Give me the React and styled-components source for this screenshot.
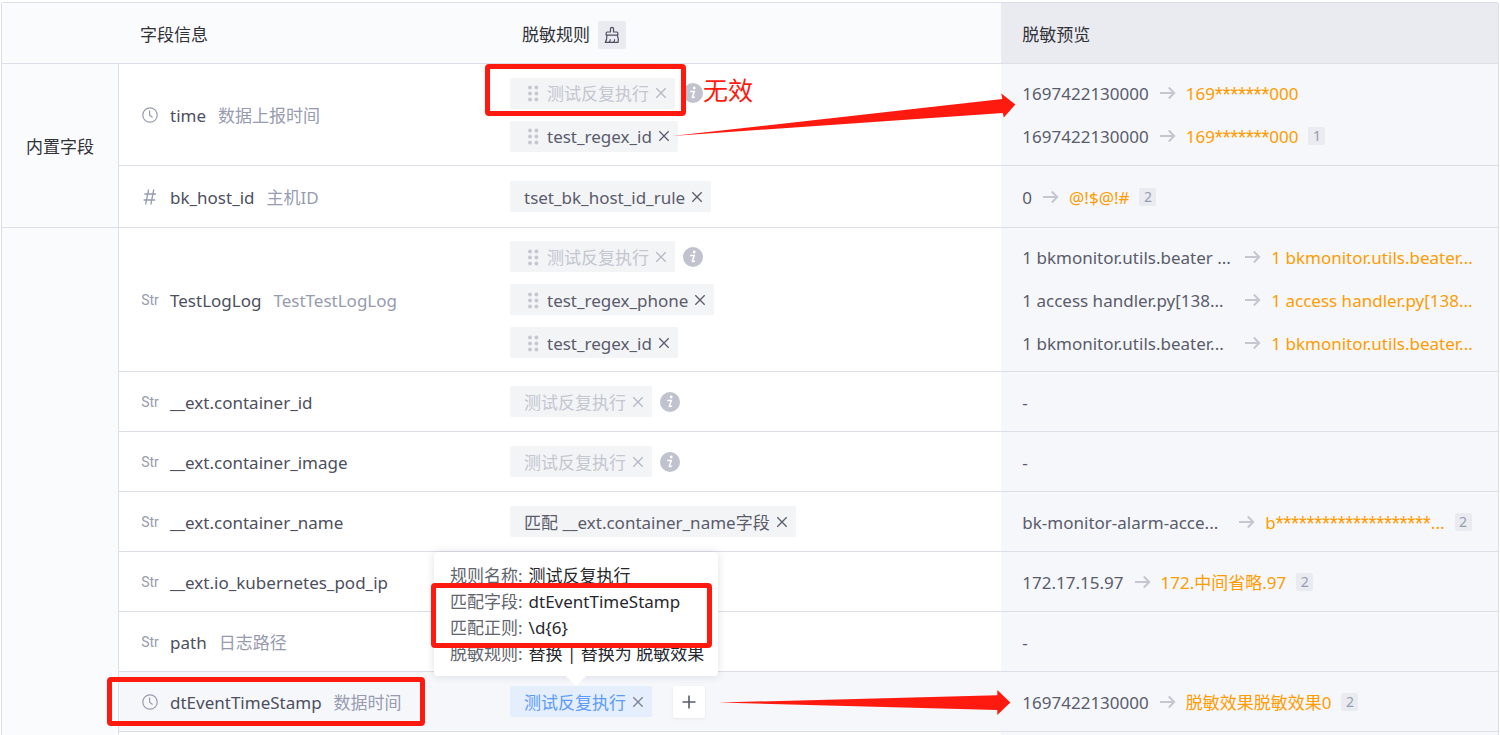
import React from "react";
import styled, { createGlobalStyle } from "styled-components";

const GlobalStyle = createGlobalStyle`
  * { box-sizing: border-box; }
  body {
    margin: 0;
    background: #fff;
    font-family: "Noto Sans", "Noto Sans CJK SC", sans-serif;
    font-size: 17px;
    line-height: 24px;
    color: #5a5c6c;
  }
  button { font: inherit; color: inherit; padding: 0; border: 0; cursor: pointer; }
`;

const Page = styled.main`
  height: 100vh;
  overflow: hidden;
  padding: 2px 1px 0;
`;

const Table = styled.table`
  width: 100%;
  table-layout: fixed;
  border-collapse: separate;
  border-spacing: 0;
  border: 1px solid #dcdee8;
  border-radius: 2px;
`;

const Col = styled.col`
  width: ${(p) => p.$width};
`;

const HeadCell = styled.th`
  height: 61px;
  padding: 3px 0 0 ${(p) => p.$indent || 21}px;
  border-bottom: 1px solid #dcdee8;
  background: ${(p) => (p.$preview ? "#eaebf0" : "#fafbfd")};
  color: #313238;
  font-weight: 400;
  text-align: left;
`;

const HeadInner = styled.div`
  display: flex;
  align-items: center;
  gap: 8px;
`;

const ClearButton = styled.button`
  display: grid;
  place-items: center;
  width: 28px;
  height: 28px;
  border-radius: 2px;
  background: #eaebf0;
`;

const GroupCell = styled.th`
  padding: 2px 0 0;
  border-right: 1px solid #dcdee8;
  border-bottom: 1px solid #dcdee8;
  background: #fafbfd;
  color: #313238;
  font-weight: 400;
  text-align: center;
`;

const Cell = styled.td`
  position: relative;
  height: ${(p) => p.$height || 60}px;
  padding: 0 0 0 ${(p) => p.$indent || 21}px;
  border-bottom: 1px solid #dcdee8;
  background: ${(p) => (p.$tint ? "#f5f7fa" : "#fff")};
  vertical-align: middle;
`;

const Field = styled.div`
  display: flex;
  align-items: center;
`;

const TypeIcon = styled.span`
  display: grid;
  place-items: center;
  width: 20px;
  margin-right: 10px;
  color: #979bb0;
  font-family: Roboto, sans-serif;
  font-size: 14px;
`;

const FieldName = styled.span`
  padding-top: 2px;
  color: #4d4f60;
`;

const FieldDesc = styled.span`
  padding-top: 2px;
  margin-left: 12px;
  color: #979bb0;
`;

const Stack = styled.div`
  display: grid;
  gap: 12px;
`;

const RuleLine = styled.div`
  display: flex;
  align-items: center;
  gap: 8px;
  height: 31px;
`;

const Tag = styled.span`
  position: relative;
  display: flex;
  align-items: center;
  height: 31px;
  padding: 0 8px 0 14px;
  border-radius: 2px;
  background: ${(p) => (p.$active ? "#e5eefd" : "#f3f4f6")};
  color: ${(p) => (p.$active ? "#5a9bfb" : p.$invalid ? "#c4c6d0" : "#5a5c6c")};
  white-space: nowrap;
`;

const TagText = styled.span`
  padding-top: 2px;
`;

const RemoveButton = styled.button`
  display: grid;
  place-items: center;
  width: 12px;
  height: 16px;
  margin-left: 6px;
  background: none;
  color: ${(p) => (p.$invalid ? "#b4b7c4" : p.$active ? "#7d8090" : "#5a5c6c")};
`;

const AddButton = styled.button`
  display: grid;
  place-items: center;
  width: 32px;
  height: 32px;
  margin-left: 13px;
  border-radius: 2px;
  background: #fff;
  box-shadow: 0 1px 3px rgba(40, 44, 80, 0.08);
`;

const Tooltip = styled.div`
  position: absolute;
  left: 50%;
  bottom: 41px;
  z-index: 3;
  width: 284px;
  margin-left: -147px;
  padding: 11px 16px 9px;
  border-radius: 4px;
  background: #fff;
  box-shadow: 0 0 8px rgba(40, 44, 80, 0.14);
  color: #26272e;
  line-height: 26px;

  &::after {
    content: "";
    position: absolute;
    left: 132px;
    top: 100%;
    border: 10px solid transparent;
    border-top-color: #fff;
    border-bottom: 0;
  }
`;

const TipRow = styled.div`
  display: flex;
  gap: 6px;
`;

const TipLabel = styled.span`
  color: #63656e;
`;

const PreviewLine = styled.div`
  display: flex;
  align-items: center;
  gap: 10px;
  height: 31px;
  white-space: nowrap;
`;

const Source = styled.span`
  min-width: ${(p) => p.$min || 0}px;
  padding-top: 2px;
`;

const Result = styled.span`
  padding-top: 2px;
  color: #ff9c01;
`;

const Stars = styled.span`
  font-family: Roboto, sans-serif;
  font-size: 18px;
`;

const Count = styled.span`
  width: 17px;
  height: 18px;
  border-radius: 2px;
  background: #eaebf0;
  color: #979bb0;
  font-size: 14px;
  line-height: 18px;
  text-align: center;
`;

const MarkBox = styled.div`
  position: absolute;
  z-index: 4;
  left: ${(p) => p.$left}px;
  top: ${(p) => p.$top}px;
  width: ${(p) => p.$width}px;
  height: ${(p) => p.$height}px;
  border: 5px solid #ff1a10;
  border-radius: 4px;
  pointer-events: none;
`;

const MarkNote = styled.strong`
  position: absolute;
  z-index: 4;
  left: 213px;
  top: 8px;
  color: #ff1a10;
  font-size: 25px;
  font-weight: 400;
  line-height: 36px;
`;

const MarkArrow = styled.svg`
  position: absolute;
  z-index: 4;
  left: ${(p) => p.$left}px;
  top: ${(p) => p.$top}px;
  width: calc(100% - ${(p) => p.$trim}px);
  height: ${(p) => p.$height}px;
  overflow: visible;
  pointer-events: none;
`;

const ClockIcon = () => (
  <svg width="18" height="18" viewBox="0 0 18 18" fill="none" stroke="currentColor" strokeWidth="1.2">
    <circle cx="9" cy="9" r="7.2" />
    <path d="M8.6 4.6V9.2L11.6 11.4" />
  </svg>
);

const HashIcon = () => (
  <svg width="18" height="18" viewBox="0 0 18 18" fill="none" stroke="currentColor" strokeWidth="1.3">
    <path d="M7.6 1.5 4.6 16.5M12.8 1.5 9.8 16.5M3.4 6H15M2.6 12H14.2" />
  </svg>
);

const DragIcon = () => (
  <svg width="23" height="18" viewBox="0 0 23 18" fill="#c4c6d0" aria-hidden="true">
    {[3.5, 9.5, 15.5].map((y) => (
      <React.Fragment key={y}>
        <circle cx="6" cy={y} r="1.9" />
        <circle cx="12.4" cy={y} r="1.9" />
      </React.Fragment>
    ))}
  </svg>
);

const CloseIcon = () => (
  <svg width="12" height="12" viewBox="0 0 12 12" fill="none" stroke="currentColor" strokeWidth="1.3">
    <path d="M1.3 1.3 10.7 10.7M10.7 1.3 1.3 10.7" />
  </svg>
);

const PlusIcon = () => (
  <svg width="14" height="14" viewBox="0 0 14 14" fill="none" stroke="currentColor" strokeWidth="1.6">
    <path d="M7 .5V13.5M.5 7H13.5" />
  </svg>
);

const InfoIcon = () => (
  <svg width="20" height="20" viewBox="0 0 20 20" role="img" aria-label="无效">
    <circle cx="10" cy="10" r="10" fill="#c0c2cd" />
    <circle cx="11.2" cy="5" r="1.4" fill="#fff" />
    <path d="M7.2 8.600H11.300L9.300 14.200Q9.500 15.200 12 13.800" fill="none" stroke="#fff" strokeWidth="1.5" />
  </svg>
);

const BroomIcon = () => (
  <svg width="16" height="18" viewBox="0 0 16 18" fill="none" stroke="#4d4f60" strokeWidth="1.2" strokeLinejoin="round">
    <path d="M6.5 6V2.4Q6.5 1.4 8 1.4T9.500 2.400V6H12.800Q13.800 6 13.800 7V9.200H2.200V7Q2.200 6 3.200 6Z" />
    <path d="M2.900 9.200C2.900 12.600 2.400 14.800 1.300 16.400H14.100Q14.800 12.600 13.300 9.200M5.100 16.200Q6.300 15 6.300 13.200M9.600 16.200Q10.600 15 10.600 13.200" />
  </svg>
);

const ArrowIcon = () => (
  <svg width="17" height="14" viewBox="0 0 17 14" fill="none" stroke="#c4c6d0" strokeWidth="2" aria-hidden="true">
    <path d="M1 7H15M9.800 1.500 15.200 7 9.800 12.500" />
  </svg>
);

const typeIcons = { time: <ClockIcon />, number: <HashIcon />, string: "Str" };

const INVALID = "测试反复执行";

const groups = [
  {
    title: "内置字段",
    fields: [
      {
        type: "time",
        name: "time",
        desc: "数据上报时间",
        height: 102,
        mark: "invalid",
        rules: [
          { text: INVALID, invalid: true, drag: true },
          { text: "test_regex_id", drag: true },
        ],
        previews: [
          { from: "1697422130000", to: "169*******000" },
          { from: "1697422130000", to: "169*******000", count: 1 },
        ],
      },
      {
        type: "number",
        name: "bk_host_id",
        desc: "主机ID",
        height: 62,
        rules: [{ text: "tset_bk_host_id_rule" }],
        previews: [{ from: "0", to: "@!$@!#", count: 2 }],
      },
    ],
  },
  {
    title: "",
    fields: [
      {
        type: "string",
        name: "TestLogLog",
        desc: "TestTestLogLog",
        height: 144,
        rules: [
          { text: INVALID, invalid: true, drag: true },
          { text: "test_regex_phone", drag: true },
          { text: "test_regex_id", drag: true },
        ],
        previews: [
          { from: "1 bkmonitor.utils.beater ...", to: "1 bkmonitor.utils.beater...", min: 212 },
          { from: "1 access handler.py[138...", to: "1 access handler.py[138...", min: 212 },
          { from: "1 bkmonitor.utils.beater...", to: "1 bkmonitor.utils.beater...", min: 212 },
        ],
      },
      { type: "string", name: "__ext.container_id", rules: [{ text: INVALID, invalid: true }] },
      { type: "string", name: "__ext.container_image", rules: [{ text: INVALID, invalid: true }] },
      {
        type: "string",
        name: "__ext.container_name",
        rules: [{ text: "匹配 __ext.container_name字段" }],
        previews: [{ from: "bk-monitor-alarm-acce...", to: "b********************...", min: 206, count: 2 }],
      },
      {
        type: "string",
        name: "__ext.io_kubernetes_pod_ip",
        rules: [],
        previews: [{ from: "172.17.15.97", to: "172.中间省略.97", count: 2 }],
      },
      { type: "string", name: "path", desc: "日志路径", rules: [] },
      {
        type: "time",
        name: "dtEventTimeStamp",
        desc: "数据时间",
        mark: "active",
        rules: [{ text: INVALID, active: true }],
        previews: [{ from: "1697422130000", to: "脱敏效果脱敏效果0", count: 2 }],
      },
      { blank: true },
    ],
  },
];

const tips = [
  ["规则名称:", "测试反复执行"],
  ["匹配字段:", "dtEventTimeStamp"],
  ["匹配正则:", "\\d{6}"],
  ["脱敏规则:", "替换 | 替换为 脱敏效果"],
];

const Masked = ({ text }) => (
  <Result>
    {text.split(/(\*+)/).map((part, i) => (part[0] === "*" ? <Stars key={i}>{part}</Stars> : part))}
  </Result>
);

const Rule = ({ rule }) => (
  <RuleLine>
    <Tag $invalid={rule.invalid} $active={rule.active}>
      {rule.drag && <DragIcon />}
      <TagText>{rule.text}</TagText>
      <RemoveButton type="button" aria-label="删除" $invalid={rule.invalid} $active={rule.active}>
        <CloseIcon />
      </RemoveButton>
      {rule.active && (
        <Tooltip role="tooltip">
          {tips.map(([label, value]) => (
            <TipRow key={label}>
              <TipLabel>{label}</TipLabel>
              <span>{value}</span>
            </TipRow>
          ))}
          <MarkBox $left={-3} $top={31} $width={281} $height={65} />
        </Tooltip>
      )}
    </Tag>
    {rule.invalid && <InfoIcon />}
    {rule.active && (
      <AddButton type="button" aria-label="添加">
        <PlusIcon />
      </AddButton>
    )}
  </RuleLine>
);

const Preview = ({ item }) => (
  <PreviewLine>
    <Source $min={item.min}>{item.from}</Source>
    <ArrowIcon />
    <Masked text={item.to} />
    {item.count && <Count>{item.count}</Count>}
  </PreviewLine>
);

const FieldCells = ({ field }) => {
  if (field.blank) {
    return (
      <>
        <Cell />
        <Cell />
        <Cell $tint />
      </>
    );
  }
  const active = field.mark === "active";
  return (
    <>
      <Cell $height={field.height} $tint={active}>
        <Field>
          <TypeIcon>{typeIcons[field.type]}</TypeIcon>
          <FieldName>{field.name}</FieldName>
          {field.desc && <FieldDesc>{field.desc}</FieldDesc>}
        </Field>
        {active && <MarkBox $left={-12} $top={5} $width={318} $height={49} />}
      </Cell>
      <Cell $indent={20} $tint={active}>
        <Stack>
          {field.rules.map((rule) => (
            <Rule key={rule.text} rule={rule} />
          ))}
        </Stack>
        {field.mark === "invalid" && (
          <>
            <MarkBox $left={-5} $top={0} $width={201} $height={52} />
            <MarkNote>无效</MarkNote>
            <MarkArrow $left={182} $top={29} $trim={168} $height={43} viewBox="0 0 343 43" preserveAspectRatio="none">
              <path d="M0 43 330 6 329 .5 343 11.500 331.500 24.500 330.500 20Z" fill="#ff1a10" />
            </MarkArrow>
          </>
        )}
        {active && (
          <MarkArrow $left={229} $top={18} $trim={220} $height={25} viewBox="0 0 291 25" preserveAspectRatio="none">
            <path d="M0 12.500 278 5.300V0L291 12.500 278 25V20Z" fill="#ff1a10" />
          </MarkArrow>
        )}
      </Cell>
      <Cell $tint>
        <Stack>
          {field.previews ? (
            field.previews.map((item, i) => <Preview key={i} item={item} />)
          ) : (
            <PreviewLine>
              <Source>-</Source>
            </PreviewLine>
          )}
        </Stack>
      </Cell>
    </>
  );
};

export default function App() {
  return (
    <Page>
      <GlobalStyle />
      <Table>
        <colgroup>
          <Col $width="117px" />
          <Col $width="24.8%" />
          <Col $width="auto" />
          <Col $width="33.2%" />
        </colgroup>
        <thead>
          <tr>
            <HeadCell />
            <HeadCell>字段信息</HeadCell>
            <HeadCell $indent={32}>
              <HeadInner>
                脱敏规则
                <ClearButton type="button" aria-label="清空">
                  <BroomIcon />
                </ClearButton>
              </HeadInner>
            </HeadCell>
            <HeadCell $preview>脱敏预览</HeadCell>
          </tr>
        </thead>
        <tbody>
          {groups.map((group) =>
            group.fields.map((field, i) => (
              <tr key={field.name || "blank"}>
                {i === 0 && <GroupCell rowSpan={group.fields.length}>{group.title}</GroupCell>}
                <FieldCells field={field} />
              </tr>
            ))
          )}
        </tbody>
      </Table>
    </Page>
  );
}
